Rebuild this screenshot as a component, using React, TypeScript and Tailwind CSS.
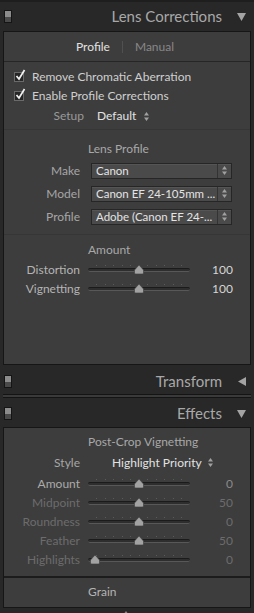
import React from "react";

const font = { fontFamily: "Lato, 'Open Sans', sans-serif" };

function Switch() {
  return (
    <div className="flex h-[13px] w-[8px] flex-col border border-[#151515]">
      <div className="h-[6px] bg-[#8c8c8c]" />
      <div className="flex-1 bg-[#4a4a4a]" />
    </div>
  );
}

function Header({ title, open, h }: { title: string; open: boolean; h: string }) {
  return (
    <div className={`flex items-center bg-[#282828] pl-[4px] pr-[8px] ${h}`}>
      <Switch />
      <div className="flex-1 text-right text-[15px] text-[#a8a8a8]">{title}</div>
      <div className="ml-[15px] flex w-[9px] justify-center">
        {open ? (
          <svg width="9" height="8" viewBox="0 0 9 8">
            <polygon points="0,0 9,0 4.5,8" fill="#a4a4a4" />
          </svg>
        ) : (
          <svg width="8" height="9" viewBox="0 0 8 9">
            <polygon points="8,0 8,9 0,4.5" fill="#a4a4a4" />
          </svg>
        )}
      </div>
    </div>
  );
}

function Check({ label }: { label: string }) {
  return (
    <div className="flex h-[19px] items-center pl-[10px] text-[#cfcfcf]">
      <div className="relative h-[10px] w-[10px] border border-[#6a6a6a] bg-[#262626]">
        <svg className="absolute left-[0px] top-[-4px]" width="11" height="12" viewBox="0 0 11 12">
          <path d="M1.5 7 L4 10 L9.5 1" stroke="#f2f2f2" strokeWidth="1.7" fill="none" />
        </svg>
      </div>
      <span className="ml-[8px]">{label}</span>
    </div>
  );
}

function UpDown({ color = "#a0a0a0" }: { color?: string }) {
  return (
    <svg width="5" height="9" viewBox="0 0 5 9">
      <polygon points="0,3.5 5,3.5 2.5,0" fill={color} />
      <polygon points="0,5.5 5,5.5 2.5,9" fill={color} />
    </svg>
  );
}

function Select({ label, value }: { label: string; value: string }) {
  return (
    <div className="flex h-[23px] items-center">
      <div className="w-[76px] text-right text-[#a6a6a6]">{label}</div>
      <div className="ml-[11px] flex h-[16px] w-[141px] items-center border border-[#262626] bg-[#4a4a4a] shadow-[inset_0_1px_0_#555]">
        <div className="flex-1 overflow-hidden whitespace-nowrap pl-[4px] text-[11.5px] text-[#e4e4e4]">{value}</div>
        <div className="flex h-full w-[14px] shrink-0 items-center justify-center border-l border-[#333]">
          <UpDown />
        </div>
      </div>
    </div>
  );
}

function Slider({
  label,
  value,
  thumb,
  labelColor,
  valueColor,
}: {
  label: string;
  value: string;
  thumb: string;
  labelColor: string;
  valueColor: string;
}) {
  return (
    <div className="flex h-[19px] items-center">
      <div className={`w-[76px] text-right ${labelColor}`}>{label}</div>
      <div className="relative ml-[8px] h-[19px] w-[102px]">
        <div className="absolute left-[8px] right-[8px] top-[5px] flex justify-between">
          {Array.from({ length: 11 }).map((_, i) => (
            <div key={i} className="h-px w-px bg-[#5a5a5a]" />
          ))}
        </div>
        <div className="absolute left-0 right-0 top-[8px] h-[4px] rounded-full border-t border-b border-t-[#1b1b1b] border-b-[#585858] bg-[#2e2e2e]" />
        <svg className={`absolute top-[5px] ${thumb}`} width="10" height="9" viewBox="0 0 10 9">
          <path d="M5 0 L9.5 5 L9.5 8 Q9.5 9 8.5 9 L1.5 9 Q0.5 9 0.5 8 L0.5 5 Z" fill="#a2a2a2" stroke="#3a3a3a" strokeWidth="0.6" />
        </svg>
      </div>
      <div className={`w-[43px] text-right ${valueColor}`}>{value}</div>
    </div>
  );
}

export default function App() {
  return (
    <div className="h-[613px] w-[254px] overflow-hidden bg-[#282828] text-[12px]" style={font}>
      <div className="h-[2px] bg-[#1e1e1e]" />
      <Header title="Lens Corrections" open={true} h="h-[29px]" />

      {/* Lens Corrections panel */}
      <div className="mx-[3px] h-[334px] border border-[#161616] bg-[#3d3d3d]">
        <div className="flex h-[30px] items-center border-b border-[#262626] pl-[72px]">
          <span className="text-[#e2e2e2]">Profile</span>
          <span className="mx-[12px] h-[12px] w-px bg-[#505050]" />
          <span className="text-[#888]">Manual</span>
        </div>
        <div className="pt-[5px]">
          <Check label="Remove Chromatic Aberration" />
          <Check label="Enable Profile Corrections" />
          <div className="flex h-[22px] items-center">
            <div className="w-[80px] text-right text-[#9a9a9a]">Setup</div>
            <span className="ml-[13px] text-[#e2e2e2]">Default</span>
            <span className="ml-[8px] flex items-center">
              <UpDown />
            </span>
          </div>
        </div>
        <div className="mt-[2px] h-px bg-[#363636]" />
        <div className="mt-[9px] flex h-[20px] items-center pl-[84px] text-[#a8a8a8]">Lens Profile</div>
        <Select label="Make" value="Canon" />
        <Select label="Model" value="Canon EF 24-105mm ..." />
        <Select label="Profile" value="Adobe (Canon EF 24-..." />
        <div className="mt-[6px] h-px bg-[#363636]" />
        <div className="mt-[5px] flex h-[20px] items-center pl-[84px] text-[#a8a8a8]">Amount</div>
        <Slider label="Distortion" value="100" thumb="left-[46px]" labelColor="text-[#b4b4b4]" valueColor="text-[#d6d6d6]" />
        <Slider label="Vignetting" value="100" thumb="left-[46px]" labelColor="text-[#b4b4b4]" valueColor="text-[#d6d6d6]" />
      </div>

      <Header title="Transform" open={false} h="h-[29px] pt-[3px]" />
      <div className="mx-[3px] h-[4px] border-y border-[#141414] bg-[#3a3a3a]" />
      <Header title="Effects" open={true} h="h-[29px] pt-[2px]" />

      {/* Effects panel */}
      <div className="mx-[3px] h-[181px] border border-[#161616] bg-[#3d3d3d]">
        <div className="mt-[4px] flex h-[20px] items-center pl-[84px] text-[#a8a8a8]">Post-Crop Vignetting</div>
        <div className="flex h-[21px] items-center">
          <div className="w-[76px] text-right text-[#a6a6a6]">Style</div>
          <span className="ml-[32px] text-[#e2e2e2]">Highlight Priority</span>
          <span className="ml-[6px] flex items-center">
            <UpDown />
          </span>
        </div>
        <div className="pt-[1px]">
          <Slider label="Amount" value="0" thumb="left-[46px]" labelColor="text-[#ababab]" valueColor="text-[#8a8a8a]" />
          <Slider label="Midpoint" value="50" thumb="left-[46px]" labelColor="text-[#6c6c6c]" valueColor="text-[#6c6c6c]" />
          <Slider label="Roundness" value="0" thumb="left-[46px]" labelColor="text-[#6c6c6c]" valueColor="text-[#6c6c6c]" />
          <Slider label="Feather" value="50" thumb="left-[46px]" labelColor="text-[#6c6c6c]" valueColor="text-[#6c6c6c]" />
          <Slider label="Highlights" value="0" thumb="left-[2px]" labelColor="text-[#6c6c6c]" valueColor="text-[#6c6c6c]" />
        </div>
        <div className="mt-[7px] h-[2px] bg-[#1c1c1c]" />
        <div className="flex h-[28px] items-center pl-[84px] text-[#b4b4b4]">Grain</div>
      </div>
      <div className="flex justify-center pr-[2px] pt-[3px]">
        <svg width="6" height="4" viewBox="0 0 6 4">
          <polygon points="0,4 6,4 3,0" fill="#8a8a8a" />
        </svg>
      </div>
    </div>
  );
}
